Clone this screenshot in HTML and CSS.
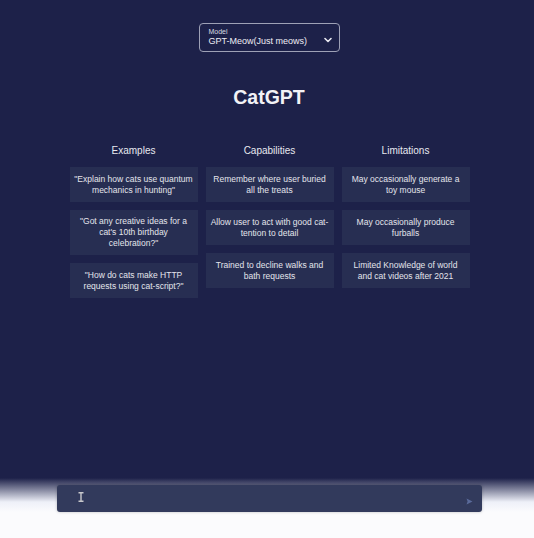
FILE: index.html
```html
<!DOCTYPE html>
<html>
<head>
<meta charset="utf-8">
<link rel="stylesheet" href="styles.css">
</head>
<body>
<div class="page">
  <main class="main">
    <div class="model">
      <div class="model-text">
        <div class="model-label">Model</div>
        <div class="model-value">GPT-Meow(Just meows)</div>
      </div>
      <svg class="chev" width="8" height="6" viewBox="0 0 8 6"><path d="M1 1.5 L4 4.5 L7 1.5" fill="none" stroke="#e8e8f0" stroke-width="1.6" stroke-linecap="round" stroke-linejoin="round"/></svg>
    </div>
    <h1 class="title">CatGPT</h1>
    <div class="cols">
      <div class="col">
        <div class="col-head">Examples</div>
        <div class="card">"Explain how cats use quantum mechanics in hunting"</div>
        <div class="card">"Got any creative ideas for a cat's 10th birthday celebration?"</div>
        <div class="card">"How do cats make HTTP requests using cat-script?"</div>
      </div>
      <div class="col">
        <div class="col-head">Capabilities</div>
        <div class="card">Remember where user buried all the treats</div>
        <div class="card">Allow user to act with good cat-tention to detail</div>
        <div class="card">Trained to decline walks and bath requests</div>
      </div>
      <div class="col">
        <div class="col-head">Limitations</div>
        <div class="card">May occasionally generate a toy mouse</div>
        <div class="card">May occasionally produce furballs</div>
        <div class="card">Limited Knowledge of world and cat videos after 2021</div>
      </div>
    </div>
  </main>
  <footer class="bottom">
    <div class="input">
      <svg class="ibeam" width="6" height="10" viewBox="0 0 6 10"><path d="M0.5 0.8 H5.5 M0.5 9.2 H5.5 M3 0.8 V9.2" fill="none" stroke="#c8c8cc" stroke-width="1.4"/></svg>
      <svg class="send" width="7" height="7" viewBox="0 0 7 7"><path d="M0.5 0.5 L6.5 3.5 L0.5 6.5 L1.6 3.5 Z" fill="#5a6a9a"/></svg>
    </div>
  </footer>
</div>
</body>
</html>
```
FILE: styles.css
```css
html, body {
  margin: 0;
  padding: 0;
}
body {
  background: #1d2149;
  font-family: "Liberation Sans", Arial, sans-serif;
  color: #e6e7ee;
  width: 534px;
  height: 538px;
  overflow: hidden;
}
.page {
  height: 538px;
  display: flex;
  flex-direction: column;
}
.main {
  flex: 1;
  display: flex;
  flex-direction: column;
  align-items: center;
  padding-top: 23px;
}
.model {
  box-sizing: border-box;
  width: 141px;
  height: 29px;
  margin-left: 4px;
  border: 1px solid #9ea1b6;
  border-radius: 4px;
  display: flex;
  align-items: center;
  justify-content: space-between;
  padding: 0 7px 0 9px;
}
.model-label {
  font-size: 7px;
  line-height: 8px;
  color: #d8d9e2;
}
.model-value {
  font-size: 9px;
  line-height: 11px;
  color: #eeeef4;
}
.chev {
  margin-top: 4px;
}
.title {
  margin: 33px 0 0 4px;
  font-size: 19.5px;
  line-height: 24px;
  font-weight: bold;
  color: #f2f2f6;
}
.cols {
  margin-top: 36px;
  display: flex;
  gap: 8px;
  margin-left: 5px;
}
.col {
  width: 128px;
  display: flex;
  flex-direction: column;
  gap: 8px;
}
.col-head {
  text-align: center;
  font-size: 10px;
  line-height: 12px;
  color: #e8e9f0;
  margin-bottom: 2px;
}
.card {
  background: #272e52;
  font-size: 8.5px;
  line-height: 11px;
  color: #e4e5ec;
  text-align: center;
  padding: 6px 4px;
  min-height: 23px;
  display: flex;
  align-items: center;
  justify-content: center;
}
.bottom {
  height: 66px;
  background: linear-gradient(to bottom, rgba(255,255,255,0) 0px, rgba(255,255,255,0) 6px, #eef0f8 30px, #fbfbfd 40px);
  display: flex;
  justify-content: center;
  padding-top: 13px;
  box-sizing: border-box;
}
.input {
  box-sizing: border-box;
  width: 425px;
  height: 27px;
  margin-left: 5px;
  background: #323a5c;
  border-radius: 3px;
  box-shadow: 0 0 3px rgba(0,0,0,0.25);
  display: flex;
  align-items: center;
  justify-content: space-between;
  padding: 0 9px 0 21px;
}
.ibeam {
  margin-top: -4px;
}
.send {
  margin-top: 5px;
}
```
